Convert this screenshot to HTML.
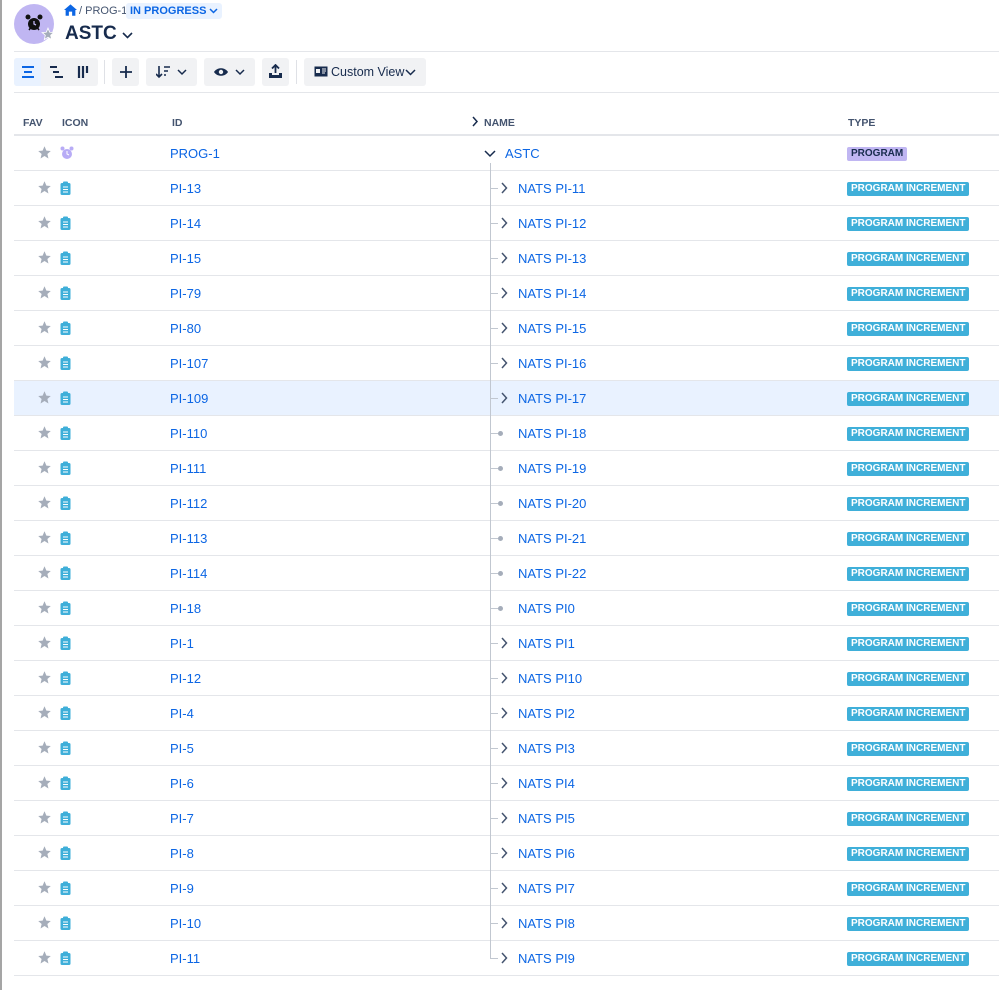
<!DOCTYPE html>
<html><head><meta charset="utf-8"><style>
*{margin:0;padding:0;box-sizing:border-box}
body{width:999px;height:990px;background:#fff;font-family:"Liberation Sans",sans-serif;position:relative;overflow:hidden}
.abs{position:absolute}
.btn{position:absolute;top:58px;height:28px;background:#f1f2f4;border-radius:3px}
.row{position:absolute;left:14px;width:985px;height:35px;border-bottom:1px solid #e4e6ea}
.id{position:absolute;left:156px;top:10px;font-size:13px;color:#0c66e4}
.nm{position:absolute;left:504px;top:10px;font-size:13px;color:#0c66e4}
.badge{position:absolute;left:833px;top:11px;height:14px;line-height:14px;padding:0 4px;font-size:10px;font-weight:bold;color:#fff;background:#3fafd9;border-radius:2px}
.star{position:absolute;left:23px;top:9px}
.ic{position:absolute;left:46px;top:10px}
.chev{position:absolute;left:486px;top:11px}
.dot{position:absolute;left:484px;top:15px;width:5px;height:5px;border-radius:50%;background:#a5adba}
.tick{position:absolute;left:476px;top:17px;width:8px;height:1px;background:#c1c7d0}
.th{position:absolute;top:117px;font-size:10.5px;font-weight:bold;color:#44546f}
</style></head><body>
<div class="abs" style="left:0;top:0;width:2px;height:990px;background:#a5a5a5"></div>
<div class="abs" style="left:14px;top:4px;width:40px;height:40px;border-radius:50%;background:#c0b6f2"></div>
<svg class="abs" style="left:24px;top:13px" width="20" height="20" viewBox="0 0 20 20"><circle cx="10" cy="11" r="6" fill="#111"/><circle cx="4" cy="4" r="2.5" fill="#111"/><circle cx="16" cy="4" r="2.5" fill="#111"/><path d="M10 8v3l2 1" stroke="#c0b6f2" stroke-width="1.3" fill="none"/><path d="M5 17l1.5-2M15 17l-1.5-2" stroke="#111" stroke-width="1.5"/></svg>
<svg class="abs" style="left:41px;top:27px" width="14" height="14" viewBox="0 0 24 24"><path d="M12 2l3 7 7 .6-5.4 4.7 1.7 7.2L12 17.6 5.7 21.5l1.7-7.2L2 9.6 9 9z" fill="#a5adba" stroke="#fff" stroke-width="1.5"/></svg>
<svg class="abs" style="left:64px;top:4px" width="13" height="12" viewBox="0 0 16 14"><path d="M8 0L0 7h2v7h4V9h4v5h4V7h2z" fill="#0c66e4"/></svg>
<div class="abs" style="left:79px;top:5px;font-size:11px;color:#44546f">/ PROG-1</div>
<div class="abs" style="left:126px;top:3px;height:16px;padding:0 4px;background:#e9f2ff;border-radius:3px;font-size:11px;font-weight:bold;color:#0c66e4;line-height:16px">IN PROGRESS <svg width="9" height="6" viewBox="0 0 9 6"><path d="M1 1l3.5 3.5L8 1" stroke="#0c66e4" stroke-width="1.5" fill="none"/></svg></div>
<div class="abs" style="left:65px;top:23px;font-size:19px;font-weight:bold;color:#172b4d">ASTC <svg width="11" height="7" viewBox="0 0 11 7"><path d="M1 1l4.5 4.5L10 1" stroke="#172b4d" stroke-width="1.6" fill="none"/></svg></div>
<div class="abs" style="left:14px;top:51px;width:985px;height:1px;background:#e4e6ea"></div>
<div class="btn" style="left:14px;width:84px"></div>
<div class="abs" style="left:14px;top:58px;width:27px;height:28px;background:#e9f2ff;border-radius:3px 0 0 3px"></div>
<svg class="abs" style="left:21px;top:65px" width="14" height="14"><path d="M1 2h12M3 7h8M1 12h12" stroke="#0c66e4" stroke-width="2"/></svg>
<svg class="abs" style="left:49px;top:65px" width="14" height="14"><path d="M1 2h7M4 7h6M6 12h8" stroke="#172b4d" stroke-width="2"/></svg>
<svg class="abs" style="left:77px;top:65px" width="14" height="14"><path d="M2 1v12M6 1v12M10 1v7" stroke="#172b4d" stroke-width="2.2"/></svg>
<div class="abs" style="left:104px;top:60px;width:1px;height:24px;background:#dfe1e6"></div>
<div class="btn" style="left:112px;width:27px"></div>
<svg class="abs" style="left:119px;top:65px" width="14" height="14"><path d="M7 1v12M1 7h12" stroke="#172b4d" stroke-width="1.8"/></svg>
<div class="btn" style="left:146px;width:51px"></div>
<svg class="abs" style="left:156px;top:65px" width="32" height="14"><path d="M3 1v11M0 9l3 3 3-3M8 2h6M8 6h4M8 10h2" stroke="#172b4d" stroke-width="1.6" fill="none"/><path d="M22 5l4 4 4-4" stroke="#172b4d" stroke-width="1.5" fill="none"/></svg>
<div class="btn" style="left:204px;width:51px"></div>
<svg class="abs" style="left:213px;top:65px" width="34" height="14"><path d="M1 7c3-5 11-5 14 0c-3 5-11 5-14 0z" fill="#172b4d"/><circle cx="8" cy="7" r="2.2" fill="#f1f2f4"/><path d="M23 5l4 4 4-4" stroke="#172b4d" stroke-width="1.5" fill="none"/></svg>
<div class="btn" style="left:262px;width:27px"></div>
<svg class="abs" style="left:268px;top:64px" width="15" height="15"><path d="M7.5 1v8M4 4.5l3.5-3.5 3.5 3.5" stroke="#172b4d" stroke-width="1.8" fill="none"/><path d="M1 9v5h13V9h-3v2H4V9z" fill="#172b4d"/></svg>
<div class="abs" style="left:296px;top:60px;width:1px;height:24px;background:#dfe1e6"></div>
<div class="btn" style="left:304px;width:122px"></div>
<svg class="abs" style="left:314px;top:66px" width="14" height="11"><rect x="0.5" y="0.5" width="13" height="10" fill="#172b4d"/><rect x="2" y="3" width="4" height="4" fill="#f1f2f4"/><path d="M8 3h4M8 5h4M8 7h3" stroke="#f1f2f4"/></svg>
<div class="abs" style="left:331px;top:65px;font-size:12.5px;color:#172b4d">Custom View</div>
<svg class="abs" style="left:405px;top:69px" width="11" height="7"><path d="M1 1l4.5 4.5L10 1" stroke="#172b4d" stroke-width="1.5" fill="none"/></svg>
<div class="abs" style="left:14px;top:92px;width:985px;height:1px;background:#e4e6ea"></div>
<div class="th" style="left:23px">FAV</div>
<div class="th" style="left:62px">ICON</div>
<div class="th" style="left:172px">ID</div>
<svg class="abs" style="left:471px;top:116px" width="8" height="11"><path d="M2 1l4 4.5L2 10" stroke="#172b4d" stroke-width="1.5" fill="none"/></svg>
<div class="th" style="left:484px">NAME</div>
<div class="th" style="left:848px">TYPE</div>
<div class="abs" style="left:14px;top:134px;width:985px;height:2px;background:#e4e6ea"></div>
<div id="rows"></div>
<div class="row" style="top:136px">
<svg class="star" width="15" height="15" viewBox="0 0 24 24"><path d="M12 2l3 7 7 .6-5.4 4.7 1.7 7.2L12 17.6 5.7 21.5l1.7-7.2L2 9.6 9 9z" fill="#a5adba"/></svg>
<svg class="ic" width="14" height="14" viewBox="0 0 14 14"><circle cx="7" cy="8" r="5" fill="#b8acf6"/><circle cx="2.5" cy="2.5" r="2" fill="#b8acf6"/><circle cx="11.5" cy="2.5" r="2" fill="#b8acf6"/><path d="M7 5v3l2 1" stroke="#fff" fill="none"/></svg>
<div class="id">PROG-1</div>
<svg class="abs" style="left:470px;top:14px" width="12" height="8"><path d="M1 1l5 5 5-5" stroke="#172b4d" stroke-width="1.5" fill="none"/></svg>
<div class="nm" style="left:491px">ASTC</div>
<div class="badge" style="background:#c0b6f2;color:#172b4d">PROGRAM</div>
</div>
<div class="abs" style="left:490px;top:163px;width:1px;height:796px;background:#c1c7d0"></div>
<script>
const d=[["PI-13","NATS PI-11",1],["PI-14","NATS PI-12",1],["PI-15","NATS PI-13",1],["PI-79","NATS PI-14",1],["PI-80","NATS PI-15",1],["PI-107","NATS PI-16",1],["PI-109","NATS PI-17",1],["PI-110","NATS PI-18",0],["PI-111","NATS PI-19",0],["PI-112","NATS PI-20",0],["PI-113","NATS PI-21",0],["PI-114","NATS PI-22",0],["PI-18","NATS PI0",0],["PI-1","NATS PI1",1],["PI-12","NATS PI10",1],["PI-4","NATS PI2",1],["PI-5","NATS PI3",1],["PI-6","NATS PI4",1],["PI-7","NATS PI5",1],["PI-8","NATS PI6",1],["PI-9","NATS PI7",1],["PI-10","NATS PI8",1],["PI-11","NATS PI9",1]];
let h="";d.forEach((r,i)=>{const t=171+i*35;h+=`<div class="row" style="top:${t}px;${r[0]=="PI-109"?"background:#e9f2ff;":""}">
<svg class="star" width="15" height="15" viewBox="0 0 24 24"><path d="M12 2l3 7 7 .6-5.4 4.7 1.7 7.2L12 17.6 5.7 21.5l1.7-7.2L2 9.6 9 9z" fill="#a5adba"/></svg>
<svg class="ic" width="11" height="14" viewBox="0 0 11 14"><rect x="0.5" y="2" width="10" height="12" rx="1.5" fill="#3fafd9"/><rect x="3" y="0.5" width="5" height="3" rx="1" fill="#3fafd9"/><path d="M3 6h5M3 8.5h5M3 11h5" stroke="#fff" stroke-width="1"/></svg>
<div class="id">${r[0]}</div><div class="tick"></div>
${r[2]?'<svg class="chev" width="8" height="12"><path d="M2 1l4.5 5L2 11" stroke="#44546f" stroke-width="1.5" fill="none"/></svg>':'<div class="dot"></div>'}
<div class="nm">${r[1]}</div><div class="badge">PROGRAM INCREMENT</div></div>`});
document.getElementById("rows").outerHTML=h;
</script>
</body></html>
